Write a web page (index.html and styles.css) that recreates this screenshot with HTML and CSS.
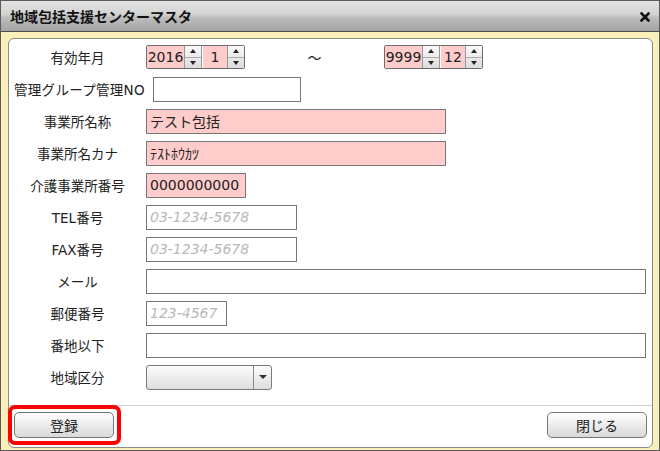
FILE: index.html
```html
<!DOCTYPE html>
<html lang="ja">
<head>
    <meta charset="UTF-8">
    <title>地域包括支援センターマスタ</title>
    <link rel="stylesheet" href="styles.css">
</head>
<body>
    <div class="window">
        <div class="titlebar">
            <span class="title">地域包括支援センターマスタ</span>
            <svg class="close" width="10" height="10" viewBox="0 0 10 10">
                <path d="M1.5 1.5 L8.5 8.5 M8.5 1.5 L1.5 8.5" stroke="#111" stroke-width="2.6" stroke-linecap="square"/>
            </svg>
        </div>
        <div class="frame">
            <div class="panel">
                <div class="form">
                    <div class="row">
                        <label>有効年月</label>
                        <div class="spin">
                            <span class="spin-val year">2016</span>
                            <span class="spin-btns"><i class="up"></i><i class="down"></i></span>
                            <span class="spin-val month">1</span>
                            <span class="spin-btns"><i class="up"></i><i class="down"></i></span>
                        </div>
                        <span class="tilde">～</span>
                        <div class="spin">
                            <span class="spin-val year">9999</span>
                            <span class="spin-btns"><i class="up"></i><i class="down"></i></span>
                            <span class="spin-val month">12</span>
                            <span class="spin-btns"><i class="up"></i><i class="down"></i></span>
                        </div>
                    </div>
                    <div class="row">
                        <label class="wide">管理グループ管理NO</label>
                        <input class="field w148 gap" type="text">
                    </div>
                    <div class="row">
                        <label>事業所名称</label>
                        <input class="field req w300" type="text" value="テスト包括">
                    </div>
                    <div class="row">
                        <label>事業所名カナ</label>
                        <input class="field req w300 kana" type="text" value="ﾃｽﾄﾎｳｶﾂ">
                    </div>
                    <div class="row">
                        <label>介護事業所番号</label>
                        <input class="field req w99" type="text" value="0000000000">
                    </div>
                    <div class="row">
                        <label>TEL番号</label>
                        <input class="field w150" type="text" placeholder="03-1234-5678">
                    </div>
                    <div class="row">
                        <label>FAX番号</label>
                        <input class="field w150" type="text" placeholder="03-1234-5678">
                    </div>
                    <div class="row">
                        <label>メール</label>
                        <input class="field w500" type="text">
                    </div>
                    <div class="row">
                        <label>郵便番号</label>
                        <input class="field w80" type="text" placeholder="123-4567">
                    </div>
                    <div class="row">
                        <label>番地以下</label>
                        <input class="field w500" type="text">
                    </div>
                    <div class="row">
                        <label>地域区分</label>
                        <div class="select">
                            <span class="select-val"></span>
                            <span class="select-arrow"></span>
                        </div>
                    </div>
                </div>
                <div class="footer">
                    <div class="btn-wrap">
                        <button class="btn">登録</button>
                        <span class="highlight"></span>
                    </div>
                    <button class="btn">閉じる</button>
                </div>
            </div>
        </div>
    </div>
</body>
</html>
```

FILE: styles.css
```css
html, body{
    margin: 0;
    padding: 0;
    background: #fff;
}
body{
    font-family: "DejaVu Sans", "Noto Sans CJK JP", sans-serif;
    font-size: 14px;
    color: #222;
}
.window{
    width: 660px;
    height: 451px;
    box-sizing: border-box;
    border: 1px solid #5a5a5a;
    display: flex;
    flex-direction: column;
}
.titlebar{
    height: 30px;
    flex: none;
    display: flex;
    align-items: center;
    justify-content: space-between;
    padding: 0 9px 0 9px;
    background: linear-gradient(#e4e4e4 0%, #d2d2d2 45%, #bdbdbd 55%, #a4a4a4 100%);
    border-bottom: 1px solid #4a4a4a;

    .title{
        font-family: "Noto Sans CJK JP", sans-serif;
        font-weight: bold;
        font-size: 14px;
        color: #111;
    }
    .close{
        margin-top: 1px;
    }
}
.frame{
    flex: 1;
    background: #fbf0b9;
    padding: 6px 6px 2px 7px;
    display: flex;
}
.panel{
    flex: 1;
    background: #fff;
    border: 1px solid #8a8a8a;
    border-radius: 6px;
    display: flex;
    flex-direction: column;
}
.form{
    padding-top: 2px;
    flex: 1;
}
.row{
    height: 32px;
    display: flex;
    align-items: center;

    label{
        width: 137px;
        text-align: center;
        font-size: 13.5px;
        white-space: nowrap;
    }
    label.wide{
        width: auto;
        padding-left: 5px;
        letter-spacing: 0.3px;
    }
}
.field{
    box-sizing: border-box;
    height: 25px;
    border: 1px solid #767676;
    background: #fff;
    font-family: "DejaVu Sans", "Noto Sans CJK JP", sans-serif;
    font-size: 14px;
    color: #222;
    padding: 0 3px;
    margin: 0;
    outline: none;
}
.field::placeholder{
    color: #b8b8b8;
    font-style: italic;
}
.field.req{ background: #ffcccc; }
.field.kana{ font-family: "Noto Sans CJK JP", sans-serif; font-size: 14px; }
.gap{ margin-left: 8px; }
.w148{ width: 148px; }
.w300{ width: 300px; }
.w99{ width: 100px; }
.w150{ width: 151px; }
.w500{ width: 500px; }
.w80{ width: 81px; }

.spin{
    display: flex;
    height: 24px;
    box-sizing: border-box;
    border: 1px solid #6e6e6e;
    border-radius: 2px;

    .spin-val{
        background: #ffcccc;
        display: flex;
        align-items: center;
        justify-content: center;
        font-size: 14px;
    }
    .year{ width: 37px; }
    .month{ width: 24px; border-left: 1px solid #fff; }
    .spin-btns{
        width: 16px;
        display: flex;
        flex-direction: column;
        border-left: 1px solid #999;
        border-right: 1px solid #999;
        background: linear-gradient(#fafafa, #dcdcdc);
    }
    .spin-btns:last-child{ border-right: none; }
    i{
        flex: 1;
        display: flex;
        align-items: center;
        justify-content: center;
    }
    i.down{ border-top: 1px solid #aaa; }
    i.up::before{
        content: "";
        border: 3px solid transparent;
        border-bottom: 4px solid #222;
        border-top: 0;
    }
    i.down::before{
        content: "";
        border: 3px solid transparent;
        border-top: 4px solid #222;
        border-bottom: 0;
    }
}
.tilde{
    font-family: "Noto Sans CJK JP", sans-serif;
    width: 139px;
    text-align: center;
    font-size: 14px;
}
.select{
    box-sizing: border-box;
    width: 126px;
    height: 25px;
    border: 1px solid #7a7a7a;
    border-radius: 3px;
    display: flex;
    background: linear-gradient(#fcfcfc, #dedede);

    .select-val{ flex: 1; }
    .select-arrow{
        width: 17px;
        border-left: 1px solid #8a8a8a;
        display: flex;
        align-items: center;
        justify-content: center;
    }
    .select-arrow::before{
        content: "";
        border: 4px solid transparent;
        border-top: 4px solid #333;
        border-bottom: 0;
    }
}
.footer{
    border-top: 1px solid #cfcfcf;
    height: 42px;
    padding: 6px 5px 0 5px;
    box-sizing: border-box;
    display: flex;
    justify-content: space-between;
    align-items: flex-start;
}
.btn-wrap{
    position: relative;
}
.btn{
    width: 100px;
    height: 26px;
    box-sizing: border-box;
    border: 1px solid #787878;
    border-radius: 5px;
    background: linear-gradient(#ffffff, #d9d9d9);
    font-family: "Noto Sans CJK JP", sans-serif;
    font-size: 14px;
    color: #222;
    padding: 0;
    display: block;
}
.highlight{
    position: absolute;
    left: -6px;
    top: -7px;
    right: -7px;
    bottom: -7px;
    border: 4px solid #ff0000;
    border-radius: 7px;
}
```
